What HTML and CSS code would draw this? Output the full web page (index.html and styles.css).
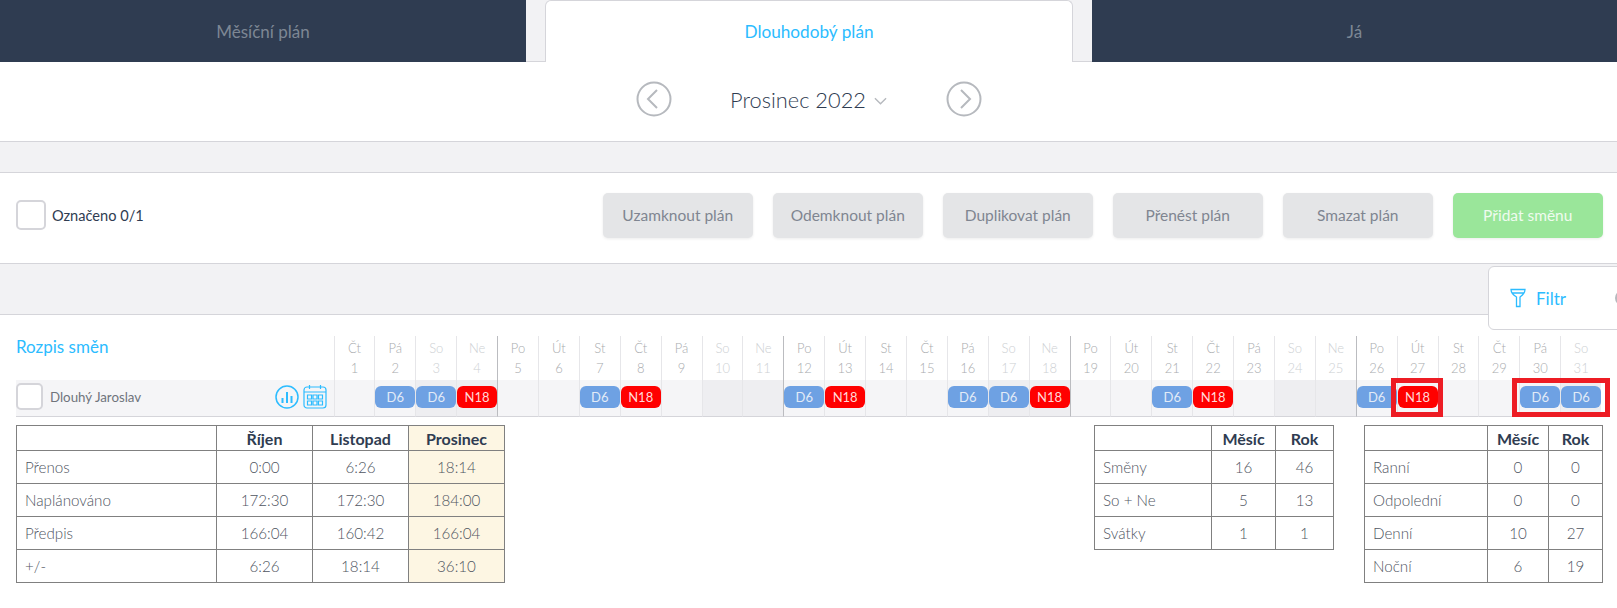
FILE: index.html
```html
<!DOCTYPE html>
<html lang="cs">
<head>
<meta charset="utf-8">
<title>Dlouhodobý plán</title>
<link rel="stylesheet" href="styles.css">
</head>
<body>
<nav class="tabs">
  <a class="tab">Měsíční plán</a>
  <a class="tab active">Dlouhodobý plán</a>
  <a class="tab">Já</a>
</nav>
<div class="month-nav">
  <svg class="arrow" viewBox="0 0 36 36"><circle cx="18" cy="18" r="16.5"/><path d="M21 9l-9 9 9 9"/></svg>
  <div class="month"><span>Prosinec 2022</span><svg class="chev" viewBox="0 0 14 8"><path d="M1 1l6 6 6-6"/></svg></div>
  <svg class="arrow" viewBox="0 0 36 36"><circle cx="18" cy="18" r="16.5"/><path d="M15 9l9 9-9 9"/></svg>
</div>
<div class="band"></div>
<div class="toolbar">
  <label class="marked"><span class="check big"></span><span>Označeno 0/1</span></label>
  <div class="actions">
    <button class="btn">Uzamknout plán</button>
    <button class="btn">Odemknout plán</button>
    <button class="btn">Duplikovat plán</button>
    <button class="btn">Přenést plán</button>
    <button class="btn">Smazat plán</button>
    <button class="btn add">Přidat směnu</button>
  </div>
</div>
<div class="band lower"></div>
<div class="filter-card">
  <svg class="funnel" viewBox="0 0 16 20"><path d="M1 1.500h14c0 4-3 6-5 7.500v9.500H6.500V9C4 7.500 1 5.500 1 1.500zM2 5h12"/></svg>
  <span>Filtr</span>
  <span class="filter-next"></span>
</div>
<section class="schedule">
  <div class="grid">
    <h2 class="title">Rozpis směn</h2>
    <div class="day">Čt<b>1</b></div>
    <div class="day">Pá<b>2</b></div>
    <div class="day we">So<b>3</b></div>
    <div class="day we">Ne<b>4</b></div>
    <div class="day wk">Po<b>5</b></div>
    <div class="day">Út<b>6</b></div>
    <div class="day">St<b>7</b></div>
    <div class="day">Čt<b>8</b></div>
    <div class="day">Pá<b>9</b></div>
    <div class="day we">So<b>10</b></div>
    <div class="day we">Ne<b>11</b></div>
    <div class="day wk">Po<b>12</b></div>
    <div class="day">Út<b>13</b></div>
    <div class="day">St<b>14</b></div>
    <div class="day">Čt<b>15</b></div>
    <div class="day">Pá<b>16</b></div>
    <div class="day we">So<b>17</b></div>
    <div class="day we">Ne<b>18</b></div>
    <div class="day wk">Po<b>19</b></div>
    <div class="day">Út<b>20</b></div>
    <div class="day">St<b>21</b></div>
    <div class="day">Čt<b>22</b></div>
    <div class="day">Pá<b>23</b></div>
    <div class="day we">So<b>24</b></div>
    <div class="day we">Ne<b>25</b></div>
    <div class="day wk">Po<b>26</b></div>
    <div class="day">Út<b>27</b></div>
    <div class="day">St<b>28</b></div>
    <div class="day">Čt<b>29</b></div>
    <div class="day">Pá<b>30</b></div>
    <div class="day we">So<b>31</b></div>

    <div class="person">
      <span class="check"></span>
      <span class="name">Dlouhý Jaroslav</span>
      <svg class="ico-chart" viewBox="0 0 24 24"><circle cx="12" cy="12" r="11"/><path d="M7.500 13v5M12 7v11M16.500 11v7"/></svg>
      <svg class="ico-cal" viewBox="0 0 24 25"><rect x="1" y="3" width="22" height="21" rx="3"/><path d="M1 8h22M6.500 1v4M17.500 1v4"/><path d="M4.500 11h4v4h-4zM10 11h4v4h-4zM15.500 11h4v4h-4zM4.500 17h4v4h-4zM10 17h4v4h-4zM15.500 17h4v4h-4z"/></svg>
    </div>
    <div class="cell"></div>
    <div class="cell"><span class="pill d">D6</span></div>
    <div class="cell we"><span class="pill d">D6</span></div>
    <div class="cell we"><span class="pill n">N18</span></div>
    <div class="cell wk"></div>
    <div class="cell"></div>
    <div class="cell"><span class="pill d">D6</span></div>
    <div class="cell"><span class="pill n">N18</span></div>
    <div class="cell"></div>
    <div class="cell we"></div>
    <div class="cell we"></div>
    <div class="cell wk"><span class="pill d">D6</span></div>
    <div class="cell"><span class="pill n">N18</span></div>
    <div class="cell"></div>
    <div class="cell"></div>
    <div class="cell"><span class="pill d">D6</span></div>
    <div class="cell we"><span class="pill d">D6</span></div>
    <div class="cell we"><span class="pill n">N18</span></div>
    <div class="cell wk"></div>
    <div class="cell"></div>
    <div class="cell"><span class="pill d">D6</span></div>
    <div class="cell"><span class="pill n">N18</span></div>
    <div class="cell"></div>
    <div class="cell we"></div>
    <div class="cell we"></div>
    <div class="cell wk"><span class="pill d">D6</span></div>
    <div class="cell"><span class="pill n">N18</span></div>
    <div class="cell"></div>
    <div class="cell"></div>
    <div class="cell"><span class="pill d">D6</span></div>
    <div class="cell we"><span class="pill d">D6</span></div>
  </div>
  <div class="mark mark-one"></div>
  <div class="mark mark-two"></div>
</section>
<section class="summary">
  <table class="stats hours">
    <tr><th></th><th>Říjen</th><th>Listopad</th><th class="now">Prosinec</th></tr>
    <tr><td>Přenos</td><td>0:00</td><td>6:26</td><td class="now">18:14</td></tr>
    <tr><td>Naplánováno</td><td>172:30</td><td>172:30</td><td class="now">184:00</td></tr>
    <tr><td>Předpis</td><td>166:04</td><td>160:42</td><td class="now">166:04</td></tr>
    <tr><td>+/-</td><td>6:26</td><td>18:14</td><td class="now">36:10</td></tr>
  </table>
  <table class="stats shifts">
    <tr><th></th><th>Měsíc</th><th>Rok</th></tr>
    <tr><td>Směny</td><td>16</td><td>46</td></tr>
    <tr><td>So + Ne</td><td>5</td><td>13</td></tr>
    <tr><td>Svátky</td><td>1</td><td>1</td></tr>
  </table>
  <table class="stats types">
    <tr><th></th><th>Měsíc</th><th>Rok</th></tr>
    <tr><td>Ranní</td><td>0</td><td>0</td></tr>
    <tr><td>Odpolední</td><td>0</td><td>0</td></tr>
    <tr><td>Denní</td><td>10</td><td>27</td></tr>
    <tr><td>Noční</td><td>6</td><td>19</td></tr>
  </table>
</section>
</body>
</html>
```
FILE: styles.css
```css
* { box-sizing: border-box; }
html, body { margin: 0; padding: 0; }
body {
  position: relative;
  width: 1617px;
  height: 608px;
  overflow: hidden;
  background: #fff;
  color: #2f3c51;
  font-family: Lato, "Noto Sans", sans-serif;
  font-size: 15px;
}

/* tabs */
.tabs {
  display: grid;
  grid-template-columns: 526px 528px 1fr;
  gap: 19px;
  height: 62px;
  background: #f2f2f4;
  border-bottom: 1px solid #d5d5da;
}
.tab {
  display: flex;
  align-items: center;
  justify-content: center;
  height: 62px;
  background: #2f3c51;
  color: #7d8794;
  font-size: 17px;
}
.tab.active {
  background: #fff;
  color: #2cbcff;
  font-size: 17.200px;
  border: 1px solid #d5d5da;
  border-bottom: 0;
  border-radius: 6px 6px 0 0;
}

/* month switcher */
.month-nav {
  display: flex;
  align-items: center;
  justify-content: center;
  height: 79px;
  padding-bottom: 5px;
}
.arrow { width: 36px; height: 36px; fill: none; stroke: #b6b9be; stroke-width: 2; }
.month {
  width: 274px;
  display: flex;
  align-items: center;
  justify-content: center;
  gap: 8px;
  font-size: 21.800px;
  font-weight: 300;
}
.chev { width: 13px; height: 8px; fill: none; stroke: #b6b9be; stroke-width: 1.500; margin-top: 4px; }

.band {
  height: 32px;
  background: #f2f2f4;
  border-top: 1px solid #d5d5da;
  border-bottom: 1px solid #d5d5da;
}
.band.lower { height: 52px; }

/* toolbar */
.toolbar {
  display: flex;
  align-items: center;
  justify-content: space-between;
  height: 90px;
  padding: 0 14px 6px 16px;
}
.marked { display: flex; align-items: center; gap: 6px; font-size: 14.600px; }
.check {
  display: block;
  flex: none;
  width: 27px;
  height: 27px;
  border: 2px solid #d5d5da;
  border-radius: 5px;
  background: #fff;
}
.check.big { width: 30px; height: 30px; }
.actions { display: flex; gap: 19.500px; }
.btn {
  width: 150.500px;
  height: 45px;
  padding: 0;
  border: 0;
  border-radius: 5px;
  background: #e4e5e7;
  box-shadow: 0 1px 3px rgba(0, 0, 0, .08);
  color: #7f8591;
  font: 400 15.500px Lato, "Noto Sans", sans-serif;
}
.btn.add { background: #9ae69a; color: #effbef; }

/* filter card */
.filter-card {
  position: absolute;
  left: 1488px;
  top: 266px;
  width: 200px;
  height: 64px;
  display: flex;
  align-items: center;
  padding-left: 21px;
  gap: 10px;
  background: #fff;
  border: 1px solid #d5d5da;
  border-radius: 6px;
  color: #2cbcff;
  font-size: 17px;
}
.funnel { width: 16px; height: 20px; fill: none; stroke: #2cbcff; stroke-width: 1.300; }
.filter-next {
  width: 16px;
  height: 16px;
  margin-left: 39px;
  border: 2px solid #b6b9be;
  border-radius: 50%;
}

/* schedule */
.schedule { position: relative; padding: 21px 0 0 16px; }
.grid {
  display: grid;
  grid-template-columns: 317.500px repeat(31, 40.900px);
  grid-template-rows: 44px 37px;
}
.title { margin: 0; color: #2cbcff; font-size: 17px; font-weight: 400; line-height: 22px; }
.day {
  display: flex;
  flex-direction: column;
  align-items: center;
  padding-top: 2px;
  border-left: 1px solid #e6e6e9;
  color: #a9abae;
  font-size: 13px;
  font-weight: 300;
  line-height: 20px;
}
.day b { font-weight: 300; }
.day.we { color: #cdd0d3; }
.day.wk { border-left-color: #bbbcc0; }
.person {
  display: flex;
  align-items: center;
  padding-bottom: 3px;
  background: #f5f5f7;
  border-bottom: 1px solid #d5d5da;
}
.name { margin-left: 7px; color: #6f747c; font-size: 13.300px; }
.ico-chart { width: 24px; height: 24px; margin-left: auto; fill: none; stroke: #2cbcff; stroke-width: 1.500; }
.ico-chart path { stroke-width: 2; }
.ico-cal { width: 24px; height: 25px; margin: 0 7px 0 4px; fill: none; stroke: #2cbcff; stroke-width: 1.200; }
.cell {
  padding-top: 6px;
  background: #f5f5f7;
  border-left: 1px solid #e6e6e9;
  border-bottom: 1px solid #d5d5da;
}
.cell.we { background: #eeeef1; }
.cell.wk { border-left-color: #bbbcc0; }
.pill {
  display: flex;
  align-items: center;
  justify-content: center;
  height: 22px;
  border-radius: 6px;
  font-size: 13px;
}
.pill.d { background: #6ea1e3; color: #e2ebf7; }
.pill.n { background: #ff0000; color: #ffd9d9; }
.mark {
  position: absolute;
  top: 63px;
  height: 39px;
  border: 5px solid #ed1c24;
}
.mark-one { left: 1391px; width: 52px; }
.mark-two { left: 1512px; width: 98px; }

/* summary tables */
.summary {
  display: flex;
  align-items: flex-start;
  gap: 30px;
  padding: 8px 14px 0 16px;
}
.stats {
  border-collapse: collapse;
  table-layout: fixed;
  color: #4f555f;
  font-size: 15.200px;
  font-weight: 300;
}
.stats th, .stats td {
  border: 1px solid #808080;
  padding: 0 8px;
  text-align: center;
}
.stats th { height: 25px; color: #2f3c51; font-size: 16px; font-weight: 700; }
.stats td { height: 33px; }
.stats td:first-child { text-align: left; }
.stats .now { background: #fdf6e3; }
.hours { width: 489px; margin-right: auto; }
.hours th:nth-child(1) { width: 200px; }
.hours th:nth-child(n+2) { width: 96px; }
.shifts { width: 240px; }
.shifts th:nth-child(1) { width: 117px; }
.shifts th:nth-child(2) { width: 64px; }
.types { width: 239px; }
.types th:nth-child(1) { width: 123px; }
.types th:nth-child(2) { width: 61px; }
```
